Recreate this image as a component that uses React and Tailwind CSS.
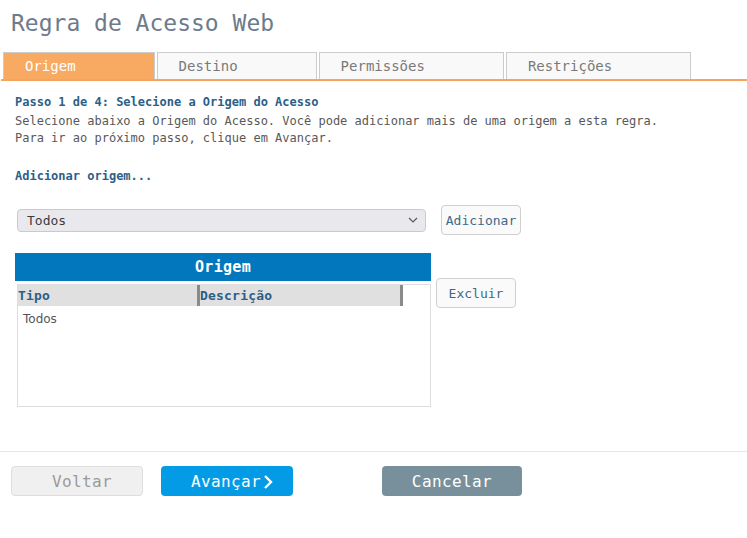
export default function App() {
  const mono = { fontFamily: '"DejaVu Sans Mono", monospace' };
  const tabs = ["Origem", "Destino", "Permissões", "Restrições"];
  return (
    <div className="w-[747px] h-[538px] bg-white overflow-hidden" style={mono}>
      <div className="pl-[11px] pt-[6px] text-[23px] leading-[34px] text-[#6e7b8b]">Regra de Acesso Web</div>

      <div className="mt-[12px] ml-[1px] border-b-2 border-[#f5a55e] flex gap-[2px] pl-[2px]">
        {tabs.map((t, i) => (
          <div
            key={t}
            className={
              "h-[27px] border border-b-0 border-[#cccccc] pl-[21px] pr-[78px] text-[14px] leading-[26px] " +
              (i === 0 ? "bg-[#f8aa63] text-white" : "bg-[#f9f9f9] text-[#7a7a7a]")
            }
          >
            {t}
          </div>
        ))}
      </div>

      <div className="pl-[15px] pt-[13px] text-[12px] leading-[17px]">
        <div className="font-bold text-[#2c5f87] mb-[2px]">Passo 1 de 4: Selecione a Origem do Acesso</div>
        <div className="text-[#585858]">Selecione abaixo a Origem do Acesso. Você pode adicionar mais de uma origem a esta regra.</div>
        <div className="text-[#585858]">Para ir ao próximo passo, clique em Avançar.</div>
        <div className="mt-[21px] font-bold text-[#2c5f87]">Adicionar origem...</div>

        <div className="mt-[20px] flex items-center h-[30px]">
          <div className="ml-[2px] w-[409px] h-[23px] rounded-[4px] border border-[#c9c9cf] bg-[#e9e9ed] flex items-center justify-between pl-[9px] pr-[6px]">
            <span className="text-[13px] text-[#3b3b3b]">Todos</span>
            <svg width="10" height="6" viewBox="0 0 10 6" className="mr-[1px]">
              <polyline points="1,1 5,5 9,1" fill="none" stroke="#5a5a5a" strokeWidth="1.2" />
            </svg>
          </div>
          <div className="ml-[15px] w-[80px] h-[30px] rounded-[4px] border border-[#cfcfcf] bg-[#fafafa] flex items-center justify-center text-[13px] text-[#3a6a8c]">
            Adicionar
          </div>
        </div>

        <div className="mt-[18px] flex">
          <div className="w-[416px]">
            <div className="h-[28px] bg-[#0277bd] text-white font-bold text-[15px] tracking-[0.3px] flex items-center justify-center">Origem</div>
            <div className="mt-[3px] ml-[2px] h-[123px] border border-[#dddddd] bg-white">
              <div className="w-[385px] h-[21px] bg-[#e0e0e0] flex text-[13px] tracking-[0.2px] font-bold text-[#2c5f87] leading-[21px]">
                <div className="w-[182px] border-r-[3px] border-[#8a8a8a]">Tipo</div>
                <div className="flex-1 border-r-[3px] border-[#8a8a8a]">Descrição</div>
              </div>
              <div className="pl-[5px] pt-[5px] text-[12px] text-[#555555]" style={{ fontFamily: '"DejaVu Sans", sans-serif' }}>Todos</div>
            </div>
          </div>
          <div className="ml-[5px] mt-[25px] w-[80px] h-[30px] rounded-[4px] border border-[#cfcfcf] bg-[#fafafa] flex items-center justify-center text-[13px] text-[#3a6a8c]">
            Excluir
          </div>
        </div>
      </div>

      <div className="mt-[44px] h-px bg-[#f1e3d7]" />

      <div className="mt-[14px] flex items-center pl-[11px]">
        <div className="w-[132px] h-[30px] pl-[10px] pt-[1px] rounded-[4px] border border-[#dedede] bg-[#f0f0f0] flex items-center justify-center text-[16px] tracking-[0.4px] text-[#9a9a9a]">
          Voltar
        </div>
        <div className="ml-[18px] w-[132px] h-[30px] pl-[10px] pt-[1px] rounded-[4px] bg-[#039be5] flex items-center justify-center text-[16px] tracking-[0.4px] text-white">
          <span>Avançar</span>
          <svg width="10" height="16" viewBox="0 0 10 16" className="ml-[2px]">
            <polyline points="2,2 8,8 2,14" fill="none" stroke="white" strokeWidth="2.4" />
          </svg>
        </div>
        <div className="ml-[89px] w-[140px] h-[30px] pt-[1px] rounded-[4px] bg-[#78909c] flex items-center justify-center text-[16px] tracking-[0.4px] text-white">
          Cancelar
        </div>
      </div>
    </div>
  );
}
